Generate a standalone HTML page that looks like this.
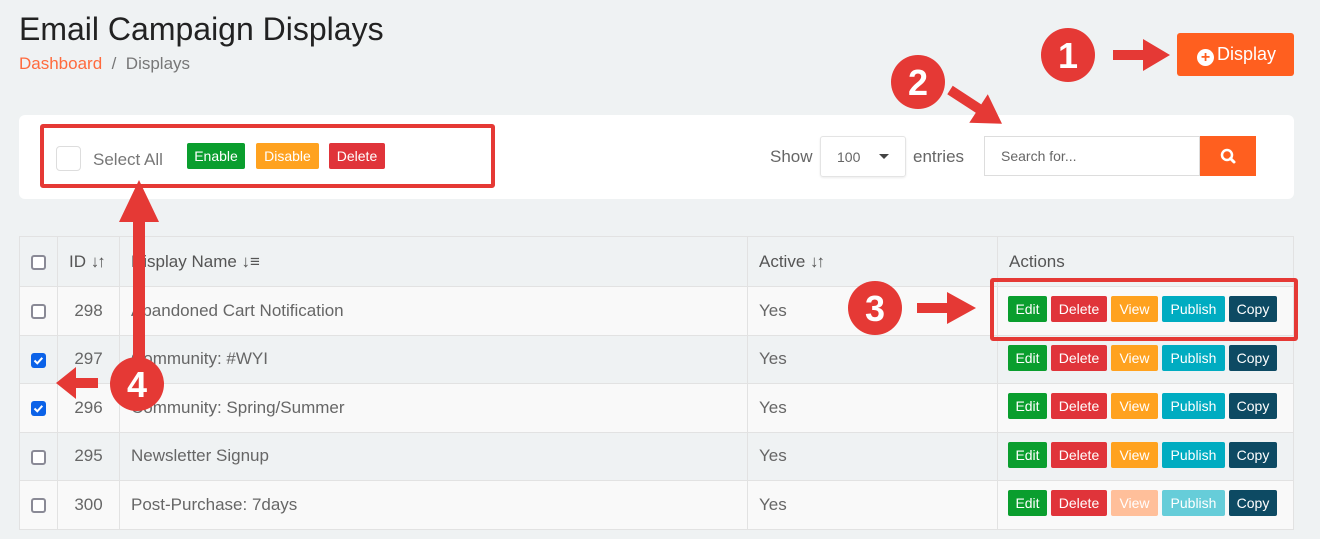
<!DOCTYPE html>
<html><head><meta charset="utf-8"><style>
*{box-sizing:border-box;margin:0;padding:0}
body{width:1320px;height:539px;background:#eff2f3;font-family:"Liberation Sans",sans-serif;position:relative;overflow:hidden;color:#555}
.a{position:absolute}
h1{position:absolute;left:19px;top:11px;font-size:32px;font-weight:normal;color:#222}
.bc{left:19px;top:54px;font-size:17px;color:#777}
.bc span{color:#ff6a3d}
.panel{left:19px;top:115px;width:1275px;height:84px;background:#fff;border-radius:6px}
.btn{position:absolute;color:#fff;font-size:14px;text-align:center;border-radius:2px;line-height:26px;height:26px}
.cb{position:absolute;width:15px;height:15px;border:2px solid #8a8a96;border-radius:3px;background:#fff}
.cbk{position:absolute;width:15px;height:15px;border-radius:3px;background:#0b62e8}
table{position:absolute;left:19px;top:236px;width:1275px;border-collapse:collapse;font-size:17px;color:#666}
td{border:1px solid #e2e2e2;height:48.5px;padding:0 11px;position:relative}
tr.h td{height:50px;color:#555}
tr.g td{background:#f9f9f9}
</style></head><body>
<h1>Email Campaign Displays</h1>
<div class="a bc"><span>Dashboard</span> &nbsp;/&nbsp; Displays</div>
<div class="a" style="left:1177px;top:33px;width:117px;height:43px;background:#ff5f1f;border-radius:3px;color:#fff;font-size:18px;line-height:43px;padding-left:20px"><span style="display:inline-block;width:17px;height:17px;border-radius:50%;background:#fff;color:#ff5f1f;font-size:16px;line-height:17px;text-align:center;font-weight:bold;vertical-align:-2px;margin-right:3px">+</span>Display</div>

<div class="a panel"></div>
<div class="a" style="left:56px;top:146px;width:25px;height:25px;border:1px solid #ddd;border-radius:4px"></div>
<div class="a" style="left:93px;top:150px;font-size:17px;color:#777">Select All</div>
<div class="btn" style="left:187px;top:143px;width:58px;background:#0a9e2e">Enable</div>
<div class="btn" style="left:256px;top:143px;width:63px;background:#ffa21f">Disable</div>
<div class="btn" style="left:329px;top:143px;width:56px;background:#e0343a">Delete</div>
<div class="a" style="left:40px;top:124px;width:455px;height:64px;border:4px solid #e53935;border-radius:3px"></div>

<div class="a" style="left:770px;top:147px;font-size:17px;color:#666">Show</div>
<div class="a" style="left:820px;top:136px;width:86px;height:41px;border:1px solid #e4e4e4;border-radius:3px;box-shadow:0 1px 2px rgba(0,0,0,.08);font-size:14px;color:#666;line-height:40px;padding-left:16px">100<span style="position:absolute;left:58px;top:17px;border:5px solid transparent;border-top:5px solid #444"></span></div>
<div class="a" style="left:913px;top:147px;font-size:17px;color:#666">entries</div>
<div class="a" style="left:984px;top:136px;width:216px;height:40px;border:1px solid #ddd;background:#fff;font-size:14px;color:#666;line-height:38px;padding-left:16px">Search for...</div>
<div class="a" style="left:1200px;top:136px;width:56px;height:40px;background:#ff5f1f">
<svg width="56" height="40"><circle cx="27" cy="19" r="5" fill="none" stroke="#fff" stroke-width="2.5"/><line x1="30.5" y1="22.5" x2="34" y2="26" stroke="#fff" stroke-width="3" stroke-linecap="round"/></svg></div>

<table>
<tr class="h"><td style="width:38px"><div class="cb" style="left:11px;top:18px"></div></td><td style="width:62px">ID <b style="letter-spacing:-2px">↓↑</b></td><td style="width:628px">Display Name <b>↓≡</b></td><td style="width:250px">Active <b style="letter-spacing:-2px">↓↑</b></td><td>Actions</td></tr>
<tr class="g"><td><div class="cb" style="left:11px;top:17px"></div></td><td style="text-align:center">298</td><td>Abandoned Cart Notification</td><td>Yes</td><td></td></tr>
<tr><td><div class="cbk" style="left:11px;top:17px"><svg width="15" height="15"><path d="M3.5 7.5l2.8 2.8 5-5.5" fill="none" stroke="#fff" stroke-width="2"/></svg></div></td><td style="text-align:center">297</td><td>Community: #WYI</td><td>Yes</td><td></td></tr>
<tr class="g"><td><div class="cbk" style="left:11px;top:17px"><svg width="15" height="15"><path d="M3.5 7.5l2.8 2.8 5-5.5" fill="none" stroke="#fff" stroke-width="2"/></svg></div></td><td style="text-align:center">296</td><td>Community: Spring/Summer</td><td>Yes</td><td></td></tr>
<tr><td><div class="cb" style="left:11px;top:17px"></div></td><td style="text-align:center">295</td><td>Newsletter Signup</td><td>Yes</td><td></td></tr>
<tr class="g"><td><div class="cb" style="left:11px;top:17px"></div></td><td style="text-align:center">300</td><td>Post-Purchase: 7days</td><td>Yes</td><td></td></tr>
</table>

<div id="acts"></div>
<script>
var ys=[296,345,393,442,490],h='';
ys.forEach(function(y,i){var f=i==4;
h+='<div class="btn" style="left:1008px;top:'+y+'px;width:39px;background:#0a9e2e">Edit</div>'+
'<div class="btn" style="left:1051px;top:'+y+'px;width:56px;background:#e0343a">Delete</div>'+
'<div class="btn" style="left:1111px;top:'+y+'px;width:47px;background:'+(f?'#ffbf9a':'#ffa21f')+'">View</div>'+
'<div class="btn" style="left:1162px;top:'+y+'px;width:63px;background:'+(f?'#66cdd9':'#00acc1')+'">Publish</div>'+
'<div class="btn" style="left:1229px;top:'+y+'px;width:48px;background:#0d4a63">Copy</div>';});
document.getElementById('acts').innerHTML=h;
</script>
<div class="a" style="left:990px;top:278px;width:308px;height:63px;border:4px solid #e53935;border-radius:3px"></div>

<svg class="a" style="left:0;top:0" width="1320" height="539">
<g fill="#e53935">
<circle cx="1068" cy="55" r="27"/>
<path d="M1113 50h30v-11l27 16-27 16v-11h-30z"/>
<circle cx="918" cy="82" r="27"/>
<path transform="translate(950,90) rotate(33)" d="M0 -5h34v-12l28 17-28 17v-12h-34z"/>
<circle cx="875" cy="308" r="27"/>
<path d="M917 303h30v-11l29 16-29 16v-11h-30z"/>
<circle cx="137" cy="384" r="27"/>
<path d="M133 365v-143h-14l20-42 20 42h-14v143z"/>
<path d="M98 378h-22v-11l-20 16 20 16v-11h22z"/>
</g>
<g fill="#fff" font-family="Liberation Sans" font-weight="bold" font-size="36" text-anchor="middle">
<text x="1068" y="68">1</text><text x="918" y="95">2</text><text x="875" y="321">3</text><text x="137" y="397">4</text>
</g>
</svg>
</body></html>
